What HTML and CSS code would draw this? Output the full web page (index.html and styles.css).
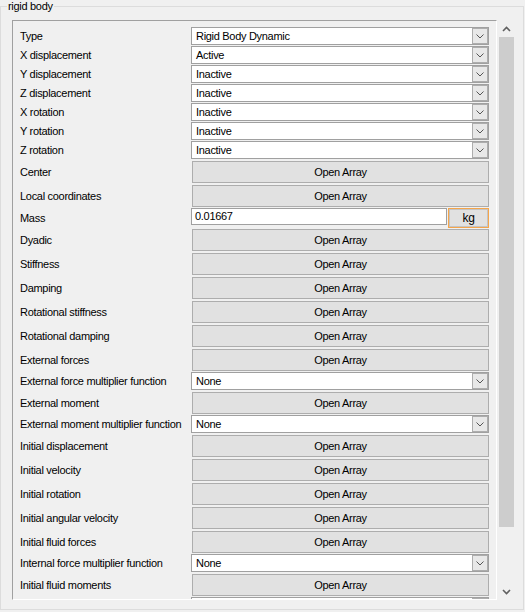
FILE: index.html
```html
<!DOCTYPE html>
<html lang="en">
<head>
    <meta charset="UTF-8">
    <title>rigid body</title>
    <link rel="stylesheet" href="styles.css">
</head>
<body>
    <fieldset class="group">
        <legend>rigid body</legend>
        <div class="group-body">
            <div class="panel">
                <div class="props">
                    <div class="row combo-row">
                        <span class="label">Type</span>
                        <div class="combo"><span class="combo-text">Rigid Body Dynamic</span><span class="combo-btn"><svg width="8" height="5" viewBox="0 0 8 5"><polyline points="0.5,0.5 4,4 7.5,0.5" fill="none" stroke="#555" stroke-width="1"/></svg></span></div>
                    </div>
                    <div class="row combo-row">
                        <span class="label">X displacement</span>
                        <div class="combo"><span class="combo-text">Active</span><span class="combo-btn"><svg width="8" height="5" viewBox="0 0 8 5"><polyline points="0.5,0.5 4,4 7.5,0.5" fill="none" stroke="#555" stroke-width="1"/></svg></span></div>
                    </div>
                    <div class="row combo-row">
                        <span class="label">Y displacement</span>
                        <div class="combo"><span class="combo-text">Inactive</span><span class="combo-btn"><svg width="8" height="5" viewBox="0 0 8 5"><polyline points="0.5,0.5 4,4 7.5,0.5" fill="none" stroke="#555" stroke-width="1"/></svg></span></div>
                    </div>
                    <div class="row combo-row">
                        <span class="label">Z displacement</span>
                        <div class="combo"><span class="combo-text">Inactive</span><span class="combo-btn"><svg width="8" height="5" viewBox="0 0 8 5"><polyline points="0.5,0.5 4,4 7.5,0.5" fill="none" stroke="#555" stroke-width="1"/></svg></span></div>
                    </div>
                    <div class="row combo-row">
                        <span class="label">X rotation</span>
                        <div class="combo"><span class="combo-text">Inactive</span><span class="combo-btn"><svg width="8" height="5" viewBox="0 0 8 5"><polyline points="0.5,0.5 4,4 7.5,0.5" fill="none" stroke="#555" stroke-width="1"/></svg></span></div>
                    </div>
                    <div class="row combo-row">
                        <span class="label">Y rotation</span>
                        <div class="combo"><span class="combo-text">Inactive</span><span class="combo-btn"><svg width="8" height="5" viewBox="0 0 8 5"><polyline points="0.5,0.5 4,4 7.5,0.5" fill="none" stroke="#555" stroke-width="1"/></svg></span></div>
                    </div>
                    <div class="row combo-row">
                        <span class="label">Z rotation</span>
                        <div class="combo"><span class="combo-text">Inactive</span><span class="combo-btn"><svg width="8" height="5" viewBox="0 0 8 5"><polyline points="0.5,0.5 4,4 7.5,0.5" fill="none" stroke="#555" stroke-width="1"/></svg></span></div>
                    </div>
                    <div class="row btn-row">
                        <span class="label">Center</span>
                        <button class="btn">Open Array</button>
                    </div>
                    <div class="row btn-row">
                        <span class="label">Local coordinates</span>
                        <button class="btn">Open Array</button>
                    </div>
                    <div class="row mass-row">
                        <span class="label">Mass</span>
                        <div class="textbox">0.01667</div>
                        <button class="unit-btn">kg</button>
                    </div>
                    <div class="row btn-row">
                        <span class="label">Dyadic</span>
                        <button class="btn">Open Array</button>
                    </div>
                    <div class="row btn-row">
                        <span class="label">Stiffness</span>
                        <button class="btn">Open Array</button>
                    </div>
                    <div class="row btn-row">
                        <span class="label">Damping</span>
                        <button class="btn">Open Array</button>
                    </div>
                    <div class="row btn-row">
                        <span class="label">Rotational stiffness</span>
                        <button class="btn">Open Array</button>
                    </div>
                    <div class="row btn-row">
                        <span class="label">Rotational damping</span>
                        <button class="btn">Open Array</button>
                    </div>
                    <div class="row btn-row">
                        <span class="label">External forces</span>
                        <button class="btn">Open Array</button>
                    </div>
                    <div class="row combo-row">
                        <span class="label">External force multiplier function</span>
                        <div class="combo"><span class="combo-text">None</span><span class="combo-btn"><svg width="8" height="5" viewBox="0 0 8 5"><polyline points="0.5,0.5 4,4 7.5,0.5" fill="none" stroke="#555" stroke-width="1"/></svg></span></div>
                    </div>
                    <div class="row btn-row">
                        <span class="label">External moment</span>
                        <button class="btn">Open Array</button>
                    </div>
                    <div class="row combo-row">
                        <span class="label">External moment multiplier function</span>
                        <div class="combo"><span class="combo-text">None</span><span class="combo-btn"><svg width="8" height="5" viewBox="0 0 8 5"><polyline points="0.5,0.5 4,4 7.5,0.5" fill="none" stroke="#555" stroke-width="1"/></svg></span></div>
                    </div>
                    <div class="row btn-row">
                        <span class="label">Initial displacement</span>
                        <button class="btn">Open Array</button>
                    </div>
                    <div class="row btn-row">
                        <span class="label">Initial velocity</span>
                        <button class="btn">Open Array</button>
                    </div>
                    <div class="row btn-row">
                        <span class="label">Initial rotation</span>
                        <button class="btn">Open Array</button>
                    </div>
                    <div class="row btn-row">
                        <span class="label">Initial angular velocity</span>
                        <button class="btn">Open Array</button>
                    </div>
                    <div class="row btn-row">
                        <span class="label">Initial fluid forces</span>
                        <button class="btn">Open Array</button>
                    </div>
                    <div class="row combo-row">
                        <span class="label">Internal force multiplier function</span>
                        <div class="combo"><span class="combo-text">None</span><span class="combo-btn"><svg width="8" height="5" viewBox="0 0 8 5"><polyline points="0.5,0.5 4,4 7.5,0.5" fill="none" stroke="#555" stroke-width="1"/></svg></span></div>
                    </div>
                    <div class="row btn-row">
                        <span class="label">Initial fluid moments</span>
                        <button class="btn">Open Array</button>
                    </div>
                    <!-- next row is scrolled out of view, only its top edge shows -->
                    <div class="row combo-row">
                        <span class="label"></span>
                        <div class="combo"><span class="combo-text"></span><span class="combo-btn"></span></div>
                    </div>
                </div>
            </div>

            <!-- vertical scrollbar -->
            <div class="vscroll">
                <div class="arrow"><svg width="9" height="6" viewBox="0 0 9 6"><polyline points="1,5 4.5,1.5 8,5" fill="none" stroke="#606060" stroke-width="1.6"/></svg></div>
                <div class="track"><div class="thumb"></div></div>
                <div class="arrow"><svg width="9" height="6" viewBox="0 0 9 6"><polyline points="1,1 4.5,4.5 8,1" fill="none" stroke="#606060" stroke-width="1.6"/></svg></div>
            </div>
        </div>
    </fieldset>
</body>
</html>
```

FILE: styles.css
```css
body {
    margin: 0;
    background-color: #f0f0f0;
    font-family: "Liberation Sans", Arial, sans-serif;
    font-size: 11px;
    letter-spacing: -0.3px;
    color: #000;
}

.group {
    width: 524px;
    box-sizing: border-box;
    margin: 0;
    padding: 7px 0 9px 0;
    border: 1px solid #dcdcdc;
}

.group legend {
    margin-left: 6px;
    padding: 0 1px;
    line-height: 13px;
}

.group-body {
    display: flex;
    margin-left: 11px;
}

.panel {
    width: 485px;
    height: 580px;
    box-sizing: border-box;
    overflow: hidden;
    border-top: 1px solid #a0a0a0;
    border-left: 1px solid #a0a0a0;
    border-right: 1px solid #fff;
    border-bottom: 1px solid #fff;
}

.props {
    padding-top: 6px;
}

.row {
    display: flex;
    align-items: flex-start;
}

.label {
    width: 178px;
    flex: none;
    box-sizing: border-box;
    padding-left: 7px;
    padding-bottom: 1px;
    align-self: stretch;
    display: flex;
    align-items: center;
    white-space: nowrap;
}

.combo-row {
    height: 19px;
}

.btn-row {
    height: 24px;
}

.mass-row {
    height: 20px;
}

/* combo box */
.combo {
    width: 298px;
    height: 18px;
    box-sizing: border-box;
    display: flex;
    background: #fff;
    border: 1px solid #a0a0a0;
}

.combo-text {
    flex: 1;
    padding-left: 4px;
    line-height: 16px;
}

.combo-btn {
    width: 16px;
    box-sizing: border-box;
    border: 1px solid #adadad;
    background: #e8e8e8;
    display: flex;
    align-items: center;
    justify-content: center;
}

/* buttons */
.btn {
    width: 297px;
    height: 22px;
    margin: 1px 0 1px 1px;
    padding: 0;
    box-sizing: border-box;
    font: inherit;
    letter-spacing: inherit;
    color: #000;
    background: #e1e1e1;
    border: 1px solid #adadad;
}

.textbox {
    width: 256px;
    height: 17px;
    box-sizing: border-box;
    padding-left: 3px;
    line-height: 15px;
    background: #fff;
    border: 1px solid #a0a0a0;
}

.unit-btn {
    width: 41px;
    height: 20px;
    margin-left: 1px;
    padding: 0;
    box-sizing: border-box;
    font: inherit;
    font-size: 12px;
    letter-spacing: inherit;
    color: #000;
    background: #e1e1e1;
    border: 1px solid #f5a54a;
    box-shadow: inset 0 0 0 1px #c4c4c4;
}

/* scrollbar */
.vscroll {
    width: 17px;
    height: 580px;
    margin-left: 1px;
    display: flex;
    flex-direction: column;
    background: #f0f0f0;
}

.arrow {
    height: 17px;
    flex: none;
    display: flex;
    align-items: center;
    justify-content: center;
}

.track {
    flex: 1;
}

.thumb {
    height: 490px;
    margin: 0 1px;
    background: #cdcdcd;
}
```
